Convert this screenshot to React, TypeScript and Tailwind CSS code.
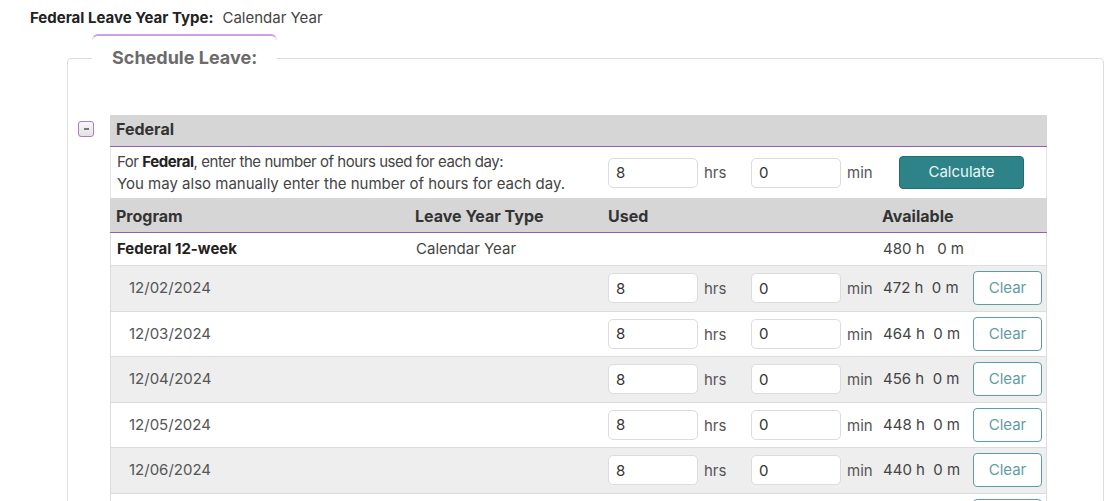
import React from 'react';

const rows = [
  { date: '12/02/2024', left: '472 h  0 m' },
  { date: '12/03/2024', left: '464 h  0 m' },
  { date: '12/04/2024', left: '456 h  0 m' },
  { date: '12/05/2024', left: '448 h  0 m' },
  { date: '12/06/2024', left: '440 h  0 m' },
  { date: '12/09/2024', left: '432 h  0 m' },
];

const HoursInputs: React.FC = () => (
  <div className="flex items-center w-[274px]">
    <input
      defaultValue="8"
      className="ml-[5px] w-[90px] h-[30px] rounded-[5px] border border-[#dcdcdc] bg-white pl-[7px] text-[15px] text-[#333] outline-none"
    />
    <span className="w-[53px] pl-[6px] pt-[2px] text-[15px] text-[#555]">hrs</span>
    <input
      defaultValue="0"
      className="w-[90px] h-[30px] rounded-[5px] border border-[#dcdcdc] bg-white pl-[7px] text-[15px] text-[#333] outline-none"
    />
    <span className="w-[36px] pl-[6px] pt-[2px] text-[15px] text-[#555]">min</span>
  </div>
);

const App: React.FC = () => {
  return (
    <div className="min-h-screen bg-white pt-[9px] font-['Inter',sans-serif] text-[#444]">
      <div className="pl-[30px] text-[15px] leading-[18px]">
        <span className="font-bold text-[#222]">Federal Leave Year Type:</span>
        <span className="ml-[9px] text-[#444]">Calendar Year</span>
      </div>

      <fieldset className="mt-[19px] ml-[67px] w-[1037px] rounded-[4px] border border-[#dddddd] pb-[20px]">
        <legend className="relative ml-[24px] px-[20px] text-[18px] font-bold leading-[24px] text-[#6b6b6b]">
          <span className="absolute -top-[12px] left-0 right-0 h-[6px] rounded-t-[8px] border-t-2 border-x border-[#c9a2e3] border-x-[#e6d4f1]" />
          Schedule Leave:
        </legend>

        <div className="mt-[45px] flex">
          <div className="ml-[10px] mt-[6px] flex h-[16px] w-[16px] items-center justify-center rounded-[3px] border border-[#a77fc6] bg-gradient-to-b from-[#f7f7f7] to-[#e2e2e2]">
            <div className="h-[2px] w-[5px] bg-[#777]" />
          </div>

          <div className="ml-[16px] w-[937px] text-[15px]">
            {/* Federal group header */}
            <div className="flex h-[32px] items-center border-b border-[#8d61ad] bg-[#d6d6d6] px-[6px] pb-[3px] text-[16px] font-bold text-[#333]">
              Federal
            </div>

            {/* instructions */}
            <div className="flex h-[51px] items-center border-x border-[#e4e4e4] bg-white">
              <div className="w-[492px] px-[6px] leading-[22px] text-[#444]">
                <div className="tracking-[-0.45px]">
                  For <span className="font-bold text-[#222]">Federal</span>, enter the number of hours used for each day:
                </div>
                <div>You may also manually enter the number of hours for each day.</div>
              </div>
              <HoursInputs />
              <button className="ml-[22px] h-[33px] w-[125px] rounded-[4px] border border-[#236d71] bg-[#2e8388] text-[15px] text-[#eaf6f6]">
                Calculate
              </button>
            </div>

            {/* column header */}
            <div className="flex h-[35px] items-center border-b border-[#8d61ad] bg-[#d6d6d6] pt-[2px] text-[16px] font-bold text-[#333]">
              <div className="w-[299px] pl-[6px]">Program</div>
              <div className="w-[193px] pl-[6px]">Leave Year Type</div>
              <div className="w-[274px] pl-[6px]">Used</div>
              <div className="pl-[6px]">Available</div>
            </div>

            {/* program row */}
            <div className="flex h-[33px] items-center border-x border-b border-[#dedede] bg-white text-[#444]">
              <div className="w-[299px] pl-[6px] font-bold text-[#222]">Federal 12-week</div>
              <div className="w-[193px] pl-[6px]">Calendar Year</div>
              <div className="w-[274px]" />
              <div className="pl-[6px] whitespace-pre">480 h   0 m</div>
            </div>

            {rows.map((r, i) => (
              <div
                key={r.date}
                className={`flex h-[45.5px] items-center border-x border-b border-[#dcdcdc] ${i % 2 === 0 ? 'bg-[#eeeeee]' : 'bg-white'}`}
              >
                <div className="w-[492px] pl-[18px] text-[#555]">{r.date}</div>
                <HoursInputs />
                <div className="w-[96px] pl-[6px] whitespace-pre text-[#444]">{r.left}</div>
                <button className="h-[34px] w-[69px] rounded-[4px] border border-[#5c9fa3] bg-white text-[15px] text-[#5f9da1]">
                  Clear
                </button>
              </div>
            ))}
          </div>
        </div>
      </fieldset>
    </div>
  );
};

export default App;
